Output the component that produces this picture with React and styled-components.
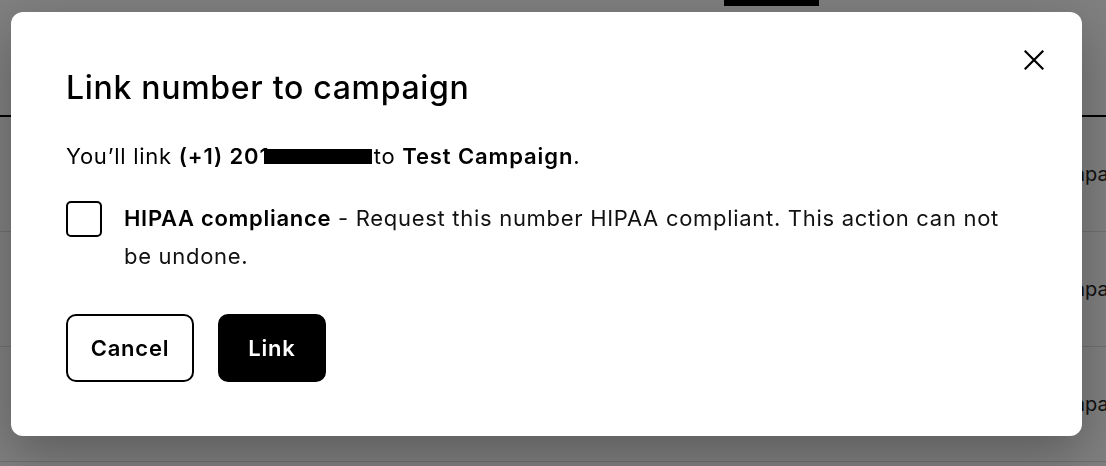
import styled, { createGlobalStyle } from "styled-components";
import { useState } from "react";

const GlobalStyle = createGlobalStyle`
  * { box-sizing: border-box; }
  html, body {
    margin: 0;
    padding: 0;
    width: 1106px;
    height: 466px;
    overflow: hidden;
    background: #ffffff;
    font-family: Inter, "Liberation Sans", sans-serif;
    color: #000000;
  }
`;

const rows = ["Test Campaign", "Test Campaign", "Test Campaign"];

const App = () => {
  const [hipaa, setHipaa] = useState(false);
  return (
    <>
      <GlobalStyle />
      <Page>
        <Header>
          <TabMark />
        </Header>
        {rows.map((name, i) => (
          <Row key={i}>
            <span />
            <RowText>{name}</RowText>
          </Row>
        ))}
      </Page>
      <Backdrop>
        <Modal>
          <CloseButton aria-label="Close">
            <svg width="20" height="20" viewBox="0 0 20 20">
              <path
                d="M1.5 1.5 L18.5 18.5 M18.5 1.5 L1.5 18.5"
                stroke="#000"
                strokeWidth="2.2"
                strokeLinecap="square"
              />
            </svg>
          </CloseButton>
          <Title>Link number to campaign</Title>
          <Summary>
            You’ll link <b>(+1) 201</b>
            <Redacted />
            to <b>Test Campaign</b>.
          </Summary>
          <CheckRow>
            <CheckBox
              $checked={hipaa}
              onClick={() => setHipaa(!hipaa)}
              aria-label="HIPAA compliance"
            />
            <CheckText>
              <b>HIPAA compliance</b> - Request this number HIPAA compliant.
              This action can not be undone.
            </CheckText>
          </CheckRow>
          <Actions>
            <Button>Cancel</Button>
            <Button $primary>Link</Button>
          </Actions>
        </Modal>
      </Backdrop>
    </>
  );
};

const Page = styled.div`
  width: 1106px;
  display: flex;
  flex-direction: column;
`;

const Header = styled.div`
  height: 117px;
  border-bottom: 2px solid #000;
  padding-left: 724px;
`;

const TabMark = styled.div`
  width: 95px;
  height: 6px;
  background: #000;
`;

const Row = styled.div`
  height: 115px;
  border-bottom: 1px solid #dedede;
  display: grid;
  grid-template-columns: 996px 1fr;
  align-items: center;
  padding-bottom: 1px;
`;

const RowText = styled.span`
  font-size: 20px;
  white-space: nowrap;
  color: #222;
`;

const Backdrop = styled.div`
  position: fixed;
  inset: 0;
  background: rgba(0, 0, 0, 0.5);
  display: flex;
  align-items: flex-start;
  padding: 12px 24px 0 11px;
`;

const Modal = styled.div`
  position: relative;
  width: 1071px;
  background: #fff;
  border-radius: 12px;
  padding: 58px 55px 54px 55px;
  box-shadow: 0 18px 50px rgba(0, 0, 0, 0.28);
  display: flex;
  flex-direction: column;
`;

const CloseButton = styled.button`
  position: absolute;
  top: 38px;
  right: 38px;
  width: 20px;
  height: 20px;
  padding: 0;
  border: none;
  background: none;
  cursor: pointer;
  display: flex;
`;

const Title = styled.h2`
  margin: 0;
  font-size: 32px;
  line-height: 36px;
  font-weight: 500;
  letter-spacing: 0.7px;
`;

const Summary = styled.p`
  margin: 34px 0 0;
  font-size: 22px;
  line-height: 32px;
  font-weight: 400;
  letter-spacing: 0.7px;
  display: flex;
  align-items: center;
  white-space: pre;

  b {
    font-weight: 600;
    letter-spacing: 0.9px;
  }
`;

const Redacted = styled.span`
  display: inline-block;
  width: 108px;
  height: 15px;
  background: #000;
  margin-left: -6px;
  margin-right: 2px;
  margin-top: 1px;
`;

const CheckRow = styled.div`
  margin-top: 27px;
  display: flex;
  align-items: flex-start;
  gap: 22px;
`;

const CheckBox = styled.button`
  flex: none;
  width: 36px;
  height: 36px;
  margin-top: 2px;
  border: 2.5px solid #000;
  border-radius: 5px;
  background: ${(p) => (p.$checked ? "#000" : "#fff")};
  padding: 0;
  cursor: pointer;
`;

const CheckText = styled.p`
  margin: 0;
  font-size: 22px;
  line-height: 38px;
  letter-spacing: 0.7px;
  color: #111;

  b {
    font-weight: 600;
    color: #000;
  }
`;

const Actions = styled.div`
  margin-top: 39px;
  display: flex;
  gap: 24px;
`;

const Button = styled.button`
  height: 68px;
  padding: 0 20px;
  min-width: ${(p) => (p.$primary ? "108px" : "128px")};
  border-radius: 10px;
  border: 2px solid #000;
  background: ${(p) => (p.$primary ? "#000" : "#fff")};
  color: ${(p) => (p.$primary ? "#fff" : "#000")};
  font-family: Inter, "Liberation Sans", sans-serif;
  font-size: 22px;
  letter-spacing: 0.8px;
  font-weight: 600;
  cursor: pointer;
`;

export default App;
